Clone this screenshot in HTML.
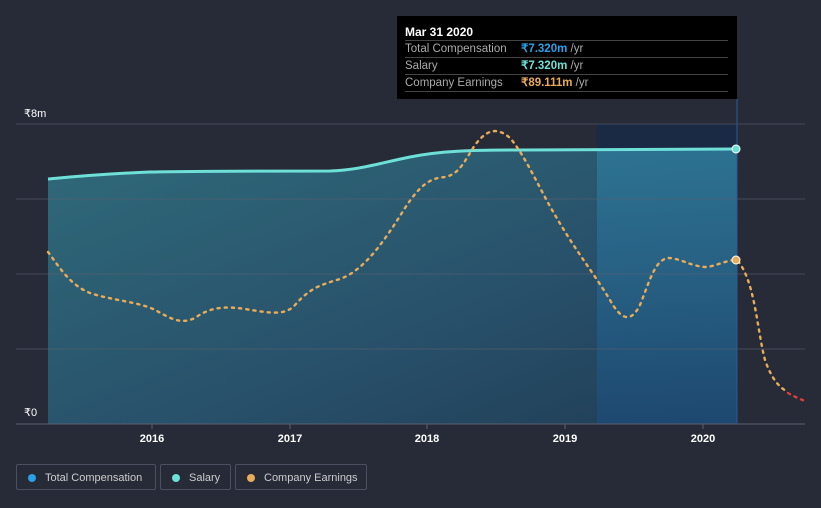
<!DOCTYPE html><html><head><style>
body{margin:0;width:821px;height:508px;background:#262b37;font-family:"Liberation Sans",sans-serif;overflow:hidden;position:relative}
.tt{position:absolute;left:397px;top:16px;width:340px;height:83px;background:#000;color:#fff}
.tt .h{position:absolute;left:8px;top:9px;font-weight:bold;font-size:12px}
.row{position:absolute;left:8px;width:323px;border-top:1px solid #444;font-size:11.5px;color:#aaa;height:16px;line-height:17px}
.row b{position:absolute;left:116px;font-weight:bold}
.leg{position:absolute;top:464px;height:26px;border:1px solid #4a5060;border-radius:2px;color:#ccc;font-size:11px;line-height:26px;box-sizing:border-box;padding-left:28px;white-space:nowrap}
.leg i{position:absolute;left:11px;top:9px;width:8px;height:8px;border-radius:50%}
</style></head><body>
<svg width="821" height="508" style="position:absolute;left:0;top:0">
<defs><linearGradient id="g" x1="0" y1="0" x2="1" y2="1"><stop offset="0" stop-color="#2f6a7a"/><stop offset="0.6" stop-color="#28506a"/><stop offset="1" stop-color="#203d55"/></linearGradient>
<linearGradient id="g2" x1="0" y1="0" x2="0" y2="1"><stop offset="0" stop-color="#2f7ea0" stop-opacity=".7"/><stop offset="1" stop-color="#1d4a76" stop-opacity=".8"/></linearGradient></defs>
<rect x="597" y="124" width="140" height="300" fill="#16294a" opacity=".7"/>
<path d="M48,179 C70,177 100,174 150,172 C200,171 300,171 330,171 C360,170 380,163 410,157 C440,151 470,150 520,150 L737,149 L737,424 L48,424Z" fill="url(#g)"/>
<path d="M597,149 L737,149 L737,424 L597,424Z" fill="url(#g2)"/>
<g stroke="#5a6070" stroke-width="1" opacity=".6"><line x1="16" y1="124" x2="805" y2="124"/><line x1="16" y1="199" x2="805" y2="199"/><line x1="16" y1="274" x2="805" y2="274"/><line x1="16" y1="349" x2="805" y2="349"/></g>
<line x1="16" y1="424" x2="805" y2="424" stroke="#5a6070"/>
<line x1="737" y1="99" x2="737" y2="424" stroke="#2a5a9a"/>
<path d="M48,179 C70,177 100,174 150,172 C200,171 300,171 330,171 C360,170 380,163 410,157 C440,151 470,150 520,150 L737,149" fill="none" stroke="#6ee0d8" stroke-width="3"/>
<path d="M48,252 C60,268 70,285 90,293 C110,300 140,302 155,310 C170,318 180,325 195,318 C210,307 225,306 245,309 C270,313 285,316 295,305 C310,288 320,285 340,279 C365,270 385,240 405,208 C420,185 430,178 445,177 C460,174 465,160 475,145 C485,132 495,125 510,138 C525,155 540,190 555,215 C575,250 595,275 610,300 C620,318 630,325 640,305 C650,280 655,260 668,258 C680,258 690,266 705,267 C715,267 725,260 737,260 C755,280 757,330 765,360 C772,380 780,388 788,392" fill="none" stroke="#e8ac5a" stroke-width="2.4" stroke-dasharray="2.2 5" stroke-linecap="round"/>
<path d="M788,393 C795,397 800,399 805,401" fill="none" stroke="#e03c3c" stroke-width="2.4" stroke-dasharray="2.2 5" stroke-linecap="round"/>
<circle cx="736" cy="149" r="4" fill="#6ee0d8" stroke="#fff" stroke-width="1"/>
<circle cx="736" cy="260" r="4" fill="#e8ac5a" stroke="#fff" stroke-width="1"/>
<g fill="#fff" font-size="11" font-family="Liberation Sans"><text x="24" y="117">₹8m</text><text x="24" y="416">₹0</text>
<g text-anchor="middle" font-weight="bold"><text x="152" y="442">2016</text><text x="290" y="442">2017</text><text x="427" y="442">2018</text><text x="565" y="442">2019</text><text x="703" y="442">2020</text></g></g>
<g stroke="#5a6070"><line x1="152" y1="424" x2="152" y2="429"/><line x1="290" y1="424" x2="290" y2="429"/><line x1="427" y1="424" x2="427" y2="429"/><line x1="565" y1="424" x2="565" y2="429"/><line x1="703" y1="424" x2="703" y2="429"/></g>
</svg>
<div class="tt"><div class="h">Mar 31 2020</div>
<div class="row" style="top:24px">Total Compensation<b style="color:#2aa0e8">₹7.320m <span style="color:#aaa;font-weight:normal">/yr</span></b></div>
<div class="row" style="top:41px">Salary<b style="color:#6ee0d8">₹7.320m <span style="color:#aaa;font-weight:normal">/yr</span></b></div>
<div class="row" style="top:58px;border-bottom:1px solid #444">Company Earnings<b style="color:#e8ac5a">₹89.111m <span style="color:#aaa;font-weight:normal">/yr</span></b></div></div>
<div class="leg" style="left:16px;width:140px"><i style="background:#2aa0e8"></i>Total Compensation</div>
<div class="leg" style="left:160px;width:71px"><i style="background:#6ee0d8"></i>Salary</div>
<div class="leg" style="left:235px;width:132px"><i style="background:#e8ac5a"></i>Company Earnings</div>
</body></html>
